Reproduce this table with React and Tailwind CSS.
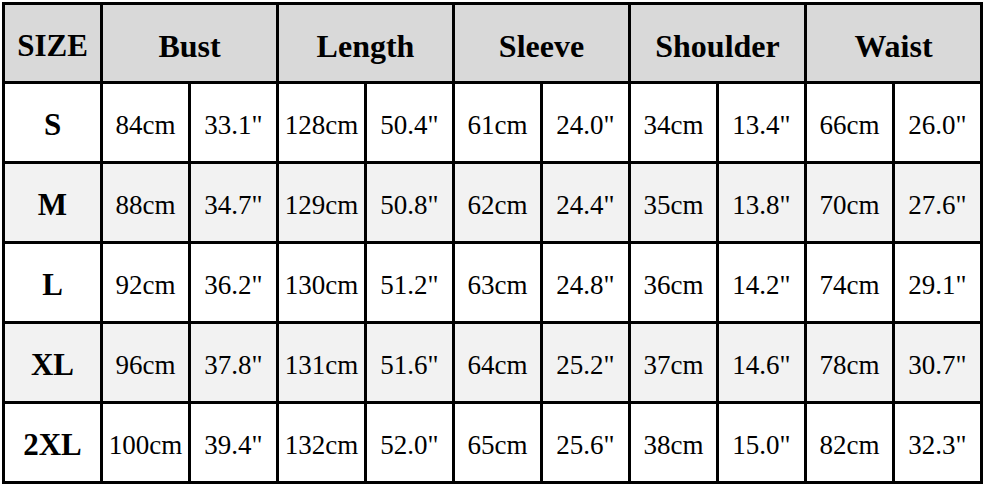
import React from "react";

const headers = ["Bust", "Length", "Sleeve", "Shoulder", "Waist"];

const rows = [
  ["S", "84cm", '33.1"', "128cm", '50.4"', "61cm", '24.0"', "34cm", '13.4"', "66cm", '26.0"'],
  ["M", "88cm", '34.7"', "129cm", '50.8"', "62cm", '24.4"', "35cm", '13.8"', "70cm", '27.6"'],
  ["L", "92cm", '36.2"', "130cm", '51.2"', "63cm", '24.8"', "36cm", '14.2"', "74cm", '29.1"'],
  ["XL", "96cm", '37.8"', "131cm", '51.6"', "64cm", '25.2"', "37cm", '14.6"', "78cm", '30.7"'],
  ["2XL", "100cm", '39.4"', "132cm", '52.0"', "65cm", '25.6"', "38cm", '15.0"', "82cm", '32.3"'],
];

const App = () => {
  return (
    <div className="w-[986px] h-[488px] bg-white p-[2px] font-['Liberation_Serif',serif] text-black">
      <div className="grid grid-cols-[95px_repeat(10,85px)] grid-rows-[76px_repeat(5,77px)] gap-[3px] p-[3px] bg-black w-fit">
        {/* Header row */}
        <div className="bg-[#d9d9d9] flex items-center justify-center pt-[6px] text-[31px] font-bold">
          SIZE
        </div>
        {headers.map((h) => (
          <div
            key={h}
            className="col-span-2 bg-[#d9d9d9] flex items-center justify-center pt-[6px] text-[32px] font-bold"
          >
            {h}
          </div>
        ))}

        {/* Body rows */}
        {rows.map((row, i) =>
          row.map((cell, j) => (
            <div
              key={i + "-" + j}
              className={`flex items-center justify-center pt-[6px] ${
                i % 2 === 1 ? "bg-[#f2f2f2]" : "bg-white"
              } ${j === 0 ? "text-[31px] font-bold" : "text-[27px]"}`}
            >
              {cell}
            </div>
          ))
        )}
      </div>
    </div>
  );
};

export default App;
